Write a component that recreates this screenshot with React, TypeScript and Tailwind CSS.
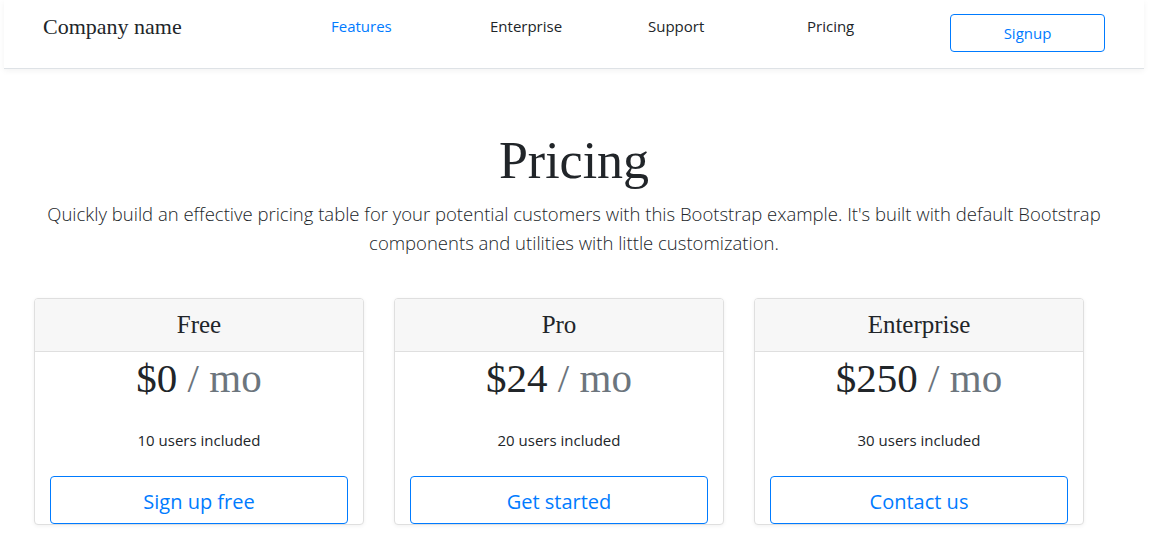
const serif = "font-['Liberation_Serif',Georgia,serif]"
const sans = "font-['Open_Sans','Noto_Sans',sans-serif]"

const plans = [
  { name: "Free", price: "$0", users: "10 users included", cta: "Sign up free" },
  { name: "Pro", price: "$24", users: "20 users included", cta: "Get started" },
  { name: "Enterprise", price: "$250", users: "30 users included", cta: "Contact us" },
]

function NavBar() {
  return (
    <header className={`flex items-start h-[69px] px-[39px] pt-[13px] bg-white border-b border-[#dee2e6] shadow-[0_2px_6px_rgba(0,0,0,0.05)] ${sans}`}>
      <div className={`w-[288px] text-[22px] leading-[28px] text-[#212529] ${serif}`}>Company name</div>
      <nav className="flex text-[15px] leading-[26px] text-[#212529]">
        <a className="w-[159px] text-[#007bff]">Features</a>
        <a className="w-[158px]">Enterprise</a>
        <a className="w-[159px]">Support</a>
        <a className="w-[143px]">Pricing</a>
      </nav>
      <button className="mt-[1px] w-[155px] h-[38px] border border-[#007bff] rounded-[4px] text-[15px] text-[#007bff]">
        Signup
      </button>
    </header>
  )
}

function PlanCard({ name, price, users, cta }: { name: string; price: string; users: string; cta: string }) {
  return (
    <div className="flex flex-col w-[330px] h-[227px] bg-white border border-[#dfdfdf] rounded-[4px] shadow-[0_1px_4px_rgba(0,0,0,0.06)] overflow-hidden">
      <div className={`h-[53px] flex items-center justify-center bg-[#f7f7f7] border-b border-[#dfdfdf] text-[25px] text-[#212529] ${serif}`}>
        {name}
      </div>
      <div className="flex flex-col items-center px-[15px]">
        <div className={`text-[41px] leading-[52px] text-[#212529] ${serif}`}>
          {price} <span className="text-[#6c757d]">/ mo</span>
        </div>
        <div className={`mt-[24px] text-[15px] leading-[24px] text-[#212529] ${sans}`}>{users}</div>
        <button className={`mt-[24px] w-full h-[48px] pt-[3px] border border-[#007bff] rounded-[4px] text-[20px] text-[#007bff] ${sans}`}>
          {cta}
        </button>
      </div>
    </div>
  )
}

export default function App() {
  return (
    <div className="w-[1164px] min-h-[546px] bg-white">
      <div className="w-[1148px]">
        <div className="mx-[4px]">
          <NavBar />
        </div>
        <div className="flex flex-col items-center text-center">
          <h1 className={`mt-[61px] text-[52px] leading-[62px] text-[#212529] ${serif}`}>Pricing</h1>
          <p className={`mt-[7px] text-[18.5px] leading-[29px] font-light text-[#212529] ${sans}`}>
            Quickly build an effective pricing table for your potential customers with this Bootstrap example. It's built with default Bootstrap
            <br />
            components and utilities with little customization.
          </p>
        </div>
        <div className="flex gap-[30px] mt-[41px] pl-[34px]">
          {plans.map((p) => (
            <PlanCard key={p.name} {...p} />
          ))}
        </div>
      </div>
    </div>
  )
}
